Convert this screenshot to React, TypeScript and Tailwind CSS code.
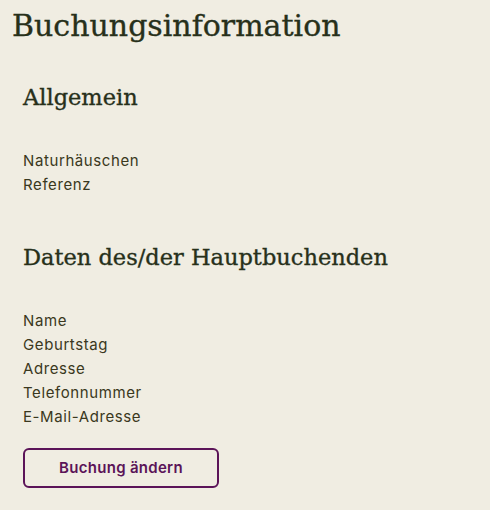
export default function App() {
  const serif = "font-['DejaVu_Serif',serif] [-webkit-text-stroke:0.35px_currentColor]";
  const sans = "font-['Inter',sans-serif]";
  return (
    <div className="min-h-[510px] w-[490px] bg-[#f0ede2] px-3 pt-[6px] text-[#27301a]">
      <h1 className={`${serif} text-[30px] leading-[40px]`}>Buchungsinformation</h1>
      <div className="px-[11px]">
        <h2 className={`${serif} mt-[36px] text-[22.5px] leading-[30px]`}>Allgemein</h2>
        <ul className={`${sans} mt-[37px] text-[15px] leading-[24px] tracking-[0.6px] text-[#3a3820]`}>
          <li>Naturhäuschen</li>
          <li>Referenz</li>
        </ul>
        <h2 className={`${serif} mt-[45px] text-[22.5px] leading-[30px]`}>
          Daten des/der Hauptbuchenden
        </h2>
        <ul className={`${sans} mt-[37px] text-[15px] leading-[24px] tracking-[0.6px] text-[#3a3820]`}>
          <li>Name</li>
          <li>Geburtstag</li>
          <li>Adresse</li>
          <li>Telefonnummer</li>
          <li>E-Mail-Adresse</li>
        </ul>
        <button
          type="button"
          className={`${sans} mt-[19px] h-[40px] w-[196px] rounded-[6px] border-2 border-[#5b1458] text-[15px] font-semibold tracking-[0.3px] text-[#5b1458]`}
        >
          Buchung ändern
        </button>
      </div>
    </div>
  );
}
